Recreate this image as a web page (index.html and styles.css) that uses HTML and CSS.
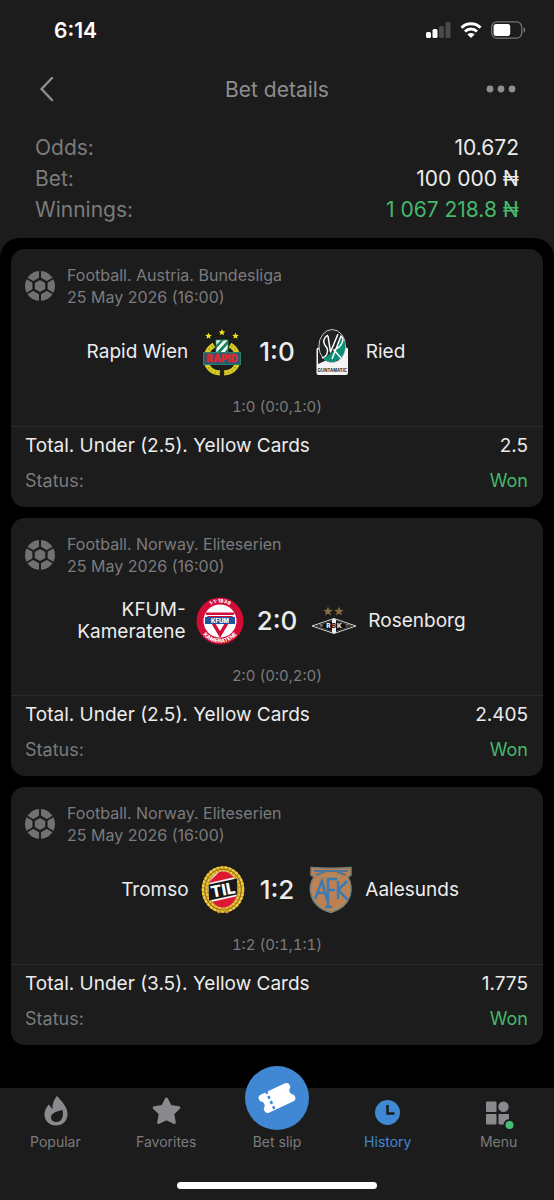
FILE: index.html
```html
<!DOCTYPE html>
<html lang="en">
<head>
<meta charset="utf-8">
<meta name="viewport" content="width=device-width, initial-scale=1">
<title>Bet details</title>
<link rel="stylesheet" href="styles.css">
</head>
<body>
<svg class="sprite" aria-hidden="true">
  <symbol id="ball" viewBox="0 0 30 30">
    <circle cx="15" cy="15" r="15" fill="#717173"/>
    <path d="M15 0V30M2 7.5L28 22.5M28 7.5L2 22.5" stroke="#1c1c1c" stroke-width="2"/>
    <path d="M15 7.600L21.400 11.300V18.700L15 22.400L8.600 18.700V11.300Z" fill="#717173" stroke="#1c1c1c" stroke-width="2.400"/>
  </symbol>
  <symbol id="star" viewBox="-10 -10 20 20">
    <path d="M0-10L2.6-3.3L9.5-3.1L4.1 1.2L5.9 8.1L0 4.2L-5.9 8.1L-4.1 1.2L-9.5-3.1L-2.6-3.3Z"/>
  </symbol>
</svg>
<div class="app">
  <header class="top">
    <div class="statusbar">
      <span class="clock">6:14</span>
      <span class="signals">
        <svg width="25" height="18" viewBox="0 0 25 18" aria-hidden="true">
          <rect x="0" y="11" width="5" height="6" rx="1.5" fill="#fff"/>
          <rect x="6.5" y="8" width="5" height="9" rx="1.5" fill="#fff"/>
          <rect x="13" y="5" width="5" height="12" rx="1.5" fill="#4a4a4a"/>
          <rect x="19.500" y="1" width="5" height="16" rx="1.5" fill="#4a4a4a"/>
        </svg>
        <svg width="22" height="18" viewBox="0 0 22 18" fill="none" stroke="#fff" stroke-width="3" aria-hidden="true">
          <path d="M1.500 6.700A13.500 13.500 0 0 1 20.500 6.700"/>
          <path d="M5 10.500A8.500 8.500 0 0 1 17 10.500"/>
          <path d="M11 17L7.400 13.400A5.200 5.200 0 0 1 14.600 13.400Z" fill="#fff" stroke="none"/>
        </svg>
        <svg width="35" height="18" viewBox="0 0 35 18" aria-hidden="true">
          <rect x="0.700" y="0.900" width="30" height="16.200" rx="5" fill="none" stroke="#757575" stroke-width="1.300"/>
          <rect x="2.600" y="2.900" width="16.600" height="12.200" rx="2.500" fill="#fff"/>
          <path d="M32.500 6.200C34.800 7 34.800 11 32.500 11.800Z" fill="#757575"/>
        </svg>
      </span>
    </div>
    <div class="navbar">
      <button class="iconbtn" type="button" aria-label="Back">
        <svg width="24" height="26" viewBox="0 0 24 26" fill="none" stroke="#8e8e90" stroke-width="2.500" stroke-linecap="round" stroke-linejoin="round"><path d="M16 2L5.500 13L16 24"/></svg>
      </button>
      <h1 class="title">Bet details</h1>
      <button class="iconbtn iconbtn-end" type="button" aria-label="More">
        <svg width="32" height="8" viewBox="0 0 32 8" fill="#8e8e90"><circle cx="4" cy="4" r="3.400"/><circle cx="15" cy="4" r="3.400"/><circle cx="26" cy="4" r="3.400"/></svg>
      </button>
    </div>
    <dl class="summary">
      <div class="sumrow"><dt>Odds:</dt><dd>10.672</dd></div>
      <div class="sumrow"><dt>Bet:</dt><dd>100 000 ₦</dd></div>
      <div class="sumrow"><dt>Winnings:</dt><dd class="win">1 067 218.8 ₦</dd></div>
    </dl>
  </header>

  <main class="events">
    <article class="card">
      <div class="league">
        <svg class="ball" aria-hidden="true"><use href="#ball"/></svg>
        <p>Football. Austria. Bundesliga<br>25 May 2026 (16:00)</p>
      </div>
      <div class="match">
        <div class="team home">
          <span class="name">Rapid Wien</span>
          <svg class="crest" viewBox="0 0 48 48" aria-hidden="true">
            <g fill="#f1e51d"><use href="#star" x="7" y="4.500" width="7" height="7"/><use href="#star" x="20.500" y="1" width="7" height="7"/><use href="#star" x="34" y="4.500" width="7" height="7"/></g>
            <path d="M22 45C6 44 3 25 16 17M26 45C42 44 45 25 32 17" fill="none" stroke="#d8cb20" stroke-width="5"/>
            <path d="M22 45C6 44 3 25 16 17M26 45C42 44 45 25 32 17" fill="none" stroke="#8f8620" stroke-width="1.500" stroke-dasharray="1 3"/>
            <rect x="18" y="12" width="12" height="13" fill="#f7faf6"/>
            <path d="M18 17L23 12H26L18 21ZM18 25L30 12V16L22 25ZM26 25L30 20V25Z" fill="#16835b"/>
            <rect x="18" y="12" width="12" height="13" fill="none" stroke="#278b69" stroke-width=".8"/>
            <rect x="5.500" y="24.500" width="37" height="12" fill="#245c78" stroke="#2a8169"/>
            <text x="24" y="34" text-anchor="middle" font-size="10" font-weight="900" fill="#d92b30" stroke="#d92b30" stroke-width=".6">RAPID</text>
          </svg>
        </div>
        <strong class="score">1:0</strong>
        <div class="team">
          <svg class="crest" viewBox="0 0 48 48" aria-hidden="true">
            <path d="M8.500 21Q8.500 19.500 11 19.500H38Q40 19.500 40 21V45Q40 47 38 47H10.500Q8.500 47 8.500 45Z" fill="#f4f4f4"/>
            <path d="M10 21.500L13 21L19 32L10 36Z" fill="#222"/>
            <ellipse cx="24.200" cy="18" rx="13.300" ry="16.500" fill="#222423" stroke="#c8c8c8"/>
            <path d="M34 7.500C41 20 35 33 24 34Q18 34 15 30Q28 25 34 7.500Z" fill="#079078"/>
            <path d="M20 7C14 11 15 15 19 20C21 25 18 29 14 30M20 8L22.500 24L30 6M24 31L33 8C37 11 34 19 26 22L33 30" fill="none" stroke="#fff" stroke-width="1.500" stroke-linejoin="round"/>
            <text class="sponsor" x="24.300" y="43.500" text-anchor="middle" font-size="4.500" font-weight="700" fill="#202020">GUNTAMATIC</text>
          </svg>
          <span class="name">Ried</span>
        </div>
      </div>
      <p class="periods">1:0 (0:0,1:0)</p>
      <dl class="market">
        <div class="mrow pick"><dt>Total. Under (2.5). Yellow Cards</dt><dd>2.5</dd></div>
        <div class="mrow"><dt>Status:</dt><dd class="win">Won</dd></div>
      </dl>
    </article>

    <article class="card">
      <div class="league">
        <svg class="ball" aria-hidden="true"><use href="#ball"/></svg>
        <p>Football. Norway. Eliteserien<br>25 May 2026 (16:00)</p>
      </div>
      <div class="match">
        <div class="team home">
          <span class="name">KFUM-Kameratene</span>
          <svg class="crest" viewBox="0 0 48 48" aria-hidden="true">
            <defs><path id="arcTop" d="M5.500 24A18.500 18.500 0 0 1 42.500 24"/><path id="arcBottom" d="M2.300 24A21.700 21.700 0 0 0 45.700 24"/></defs>
            <circle cx="24" cy="24" r="23.500" fill="#d20c36"/>
            <circle cx="24" cy="24" r="16.500" fill="#fff"/>
            <path d="M9 15.500H39L24 41Z" fill="#d20c36"/>
            <path d="M16 21H32L24 34Z" fill="#fff"/>
            <path d="M10 18.500H38" stroke="#fff"/>
            <rect x="9" y="20" width="30" height="7" fill="#1d55a0"/>
            <text x="24" y="25.700" text-anchor="middle" font-size="6" font-weight="800" fill="#fff">KFUM</text>
            <text font-size="5" font-weight="800" fill="#fff" text-anchor="middle"><textPath href="#arcTop" startOffset="50%">1·1·1939</textPath></text>
            <text font-size="5.500" font-weight="800" fill="#fff" text-anchor="middle"><textPath href="#arcBottom" startOffset="50%">KAMERATENE</textPath></text>
          </svg>
        </div>
        <strong class="score">2:0</strong>
        <div class="team">
          <svg class="crest" viewBox="0 0 48 48" aria-hidden="true">
            <g fill="#856b3d"><use href="#star" x="13" y="9.500" width="10" height="10"/><use href="#star" x="24" y="9.500" width="10" height="10"/></g>
            <path d="M2 29L24 21.500L46 29L24 36.500Z" fill="#111" stroke="#d2d2d2"/>
            <path d="M6 29L24 23L42 29L24 35Z" fill="none" stroke="#777" stroke-width=".5"/>
            <path d="M22 22.500L24 21.500L26 22.500V35.500L24 36.500L22 35.500Z" fill="#eee"/>
            <g font-size="6.500" font-weight="800" fill="#eee" text-anchor="middle"><text x="18.500" y="31.300">R</text><text x="24" y="31.300" fill="#222">B</text><text x="29.500" y="31.300">K</text></g>
            <g font-size="3" fill="#ddd" text-anchor="middle"><text x="11" y="30">19</text><text x="37" y="30">17</text></g>
          </svg>
          <span class="name">Rosenborg</span>
        </div>
      </div>
      <p class="periods">2:0 (0:0,2:0)</p>
      <dl class="market">
        <div class="mrow pick"><dt>Total. Under (2.5). Yellow Cards</dt><dd>2.405</dd></div>
        <div class="mrow"><dt>Status:</dt><dd class="win">Won</dd></div>
      </dl>
    </article>

    <article class="card">
      <div class="league">
        <svg class="ball" aria-hidden="true"><use href="#ball"/></svg>
        <p>Football. Norway. Eliteserien<br>25 May 2026 (16:00)</p>
      </div>
      <div class="match">
        <div class="team home">
          <span class="name">Tromso</span>
          <svg class="crest" viewBox="0 0 48 48" aria-hidden="true">
            <defs><clipPath id="tilOval"><ellipse cx="24" cy="23.500" rx="14.500" ry="18"/></clipPath></defs>
            <ellipse cx="24" cy="23.500" rx="18" ry="20" fill="none" stroke="#c99c24" stroke-width="6.500"/>
            <ellipse cx="24" cy="23.500" rx="20" ry="22" fill="none" stroke="#f4cf43" stroke-width="2.500" stroke-dasharray="2.600 1.400"/>
            <ellipse cx="24" cy="23.500" rx="16.800" ry="19" fill="none" stroke="#f0c83c" stroke-width="2" stroke-dasharray="2.300 1.500"/>
            <ellipse cx="24" cy="23.500" rx="18.300" ry="20.500" fill="none" stroke="#6a4d14" stroke-width=".7"/>
            <path d="M24 42L19 47M24 42L29 47" stroke="#c99c24" stroke-width="2"/>
            <g clip-path="url(#tilOval)"><path d="M8 4H40V44H8Z" fill="#f2f2ef"/><path d="M10 16L24 2L34 8L36 11L10 17ZM12 36L39 30L36 38L24 46Z" fill="#dd1833"/></g>
            <path d="M10 18.500L38 12.500V28.500L10 34.500Z" fill="#181818"/>
            <text x="24" y="29.500" text-anchor="middle" font-size="16" font-weight="800" fill="#fff" transform="rotate(-11 24 24)">TIL</text>
          </svg>
        </div>
        <strong class="score">1:2</strong>
        <div class="team">
          <svg class="crest" viewBox="0 0 48 48" aria-hidden="true">
            <path d="M4 1.500Q24 3 44 1.500V9L41 11Q46 20 43 30Q39 42 24 46.500Q8 42 4.500 30Q1 20 7 11L4 9Z" fill="#bf8051" stroke="#778078" stroke-width="1.500"/>
            <path d="M7 5H41M9 9Q15 7 19 5M39 9Q33 7 29 5" fill="none" stroke="#4d789e" stroke-width="2"/>
            <path d="M24 9C10 9 5 20 7 29C10 39 19 43 24 44C35 40 42 34 41 24C40 13 32 9 24 9" fill="none" stroke="#a49469"/>
            <path d="M8 33L15 15L20 34M10 27H19M21 42V13H30M21 24H28M31 15V33M40 15L31 24L41 34M18 41H25" fill="none" stroke="#387bb6" stroke-width="2.500"/>
          </svg>
          <span class="name">Aalesunds</span>
        </div>
      </div>
      <p class="periods">1:2 (0:1,1:1)</p>
      <dl class="market">
        <div class="mrow pick"><dt>Total. Under (3.5). Yellow Cards</dt><dd>1.775</dd></div>
        <div class="mrow"><dt>Status:</dt><dd class="win">Won</dd></div>
      </dl>
    </article>
  </main>

  <nav class="tabbar" aria-label="Main">
    <div class="tabs">
      <a class="tab" href="#popular">
        <svg class="tabicon" viewBox="0 0 30 30" aria-hidden="true"><path fill="#8a8a8e" fill-rule="evenodd" d="M17 0C22 5.500 27.500 11 27.500 18C27.500 25 22.500 29.500 16 29.500C9 29.500 4.500 24.500 4.500 18.500C4.500 14 7 10.500 9 8.500Q11 12 12.500 13C12 8 14 3.500 17 0ZM22.500 14C17 15 11 17 11 21.500C11 24.500 13.500 26 16.500 26C22 26 24 20 22.500 14Z"/></svg>
        <span>Popular</span>
      </a>
      <a class="tab" href="#favorites">
        <svg class="tabicon" viewBox="0 0 30 30" aria-hidden="true"><path fill="#8a8a8e" stroke="#8a8a8e" stroke-width="3" stroke-linejoin="round" d="M15.500 3L19.200 10.500L27.800 11.700L21.700 17.700L23.300 26.500L15.500 22.600L7.700 26.500L9.300 17.700L3.200 11.700L11.800 10.500Z"/></svg>
        <span>Favorites</span>
      </a>
      <a class="tab slip" href="#betslip">
        <svg class="slipicon" viewBox="0 0 64 64" aria-hidden="true">
          <circle cx="32" cy="32" r="32" fill="#4087d4"/>
          <g transform="rotate(-25 32 32)">
            <path fill="#fff" d="M19 22H45Q49 22 49 26Q49 28 48 28.500A4 4 0 0 0 48 35.500Q49 36 49 38Q49 42 45 42H19Q15 42 15 38Q15 36 16 35.500A4 4 0 0 0 16 28.500Q15 28 15 26Q15 22 19 22Z"/>
            <path stroke="#4087d4" stroke-width="2.600" stroke-dasharray="3 2.600" d="M25 21V43"/>
          </g>
        </svg>
        <span>Bet slip</span>
      </a>
      <a class="tab active" href="#history" aria-current="page">
        <svg class="tabicon" viewBox="0 0 30 30" aria-hidden="true"><circle cx="14.500" cy="16.500" r="12.500" fill="#4087d4"/><path d="M14.500 9V17.500H21.500" fill="none" stroke="#1c1c1c" stroke-width="2.500"/></svg>
        <span>History</span>
      </a>
      <a class="tab" href="#menu">
        <svg class="tabicon" viewBox="0 0 30 30" aria-hidden="true"><g fill="#8a8a8e"><rect x="2" y="5.500" width="10.500" height="10.500" rx="1"/><circle cx="19.500" cy="10.700" r="5.200"/><rect x="2" y="18" width="10.500" height="10.500" rx="1"/><rect x="14.500" y="18" width="10.500" height="10.500" rx="1"/></g><circle cx="25.500" cy="29" r="5" fill="#46bd72" stroke="#1c1c1c" stroke-width="2"/></svg>
        <span>Menu</span>
      </a>
    </div>
    <div class="homebar"></div>
  </nav>
</div>
</body>
</html>
```
FILE: styles.css
```css
* { box-sizing: border-box; }

body {
  margin: 0;
  background: #000;
  color: #ececec;
  font-family: Inter, "Liberation Sans", sans-serif;
}

p, h1, dl, dd { margin: 0; }

.sprite {
  position: absolute;
  width: 0;
  height: 0;
}

.app {
  display: flex;
  flex-direction: column;
  min-height: 100vh;
  background: #1c1c1c;
}

.statusbar {
  display: flex;
  align-items: center;
  justify-content: space-between;
  height: 60px;
  padding: 0 28px 0 54px;
}

.clock {
  color: #fff;
  font-size: 21px;
  font-weight: 600;
}

.signals {
  display: flex;
  gap: 9px;
}

.navbar {
  display: grid;
  grid-template-columns: 1fr auto 1fr;
  align-items: center;
  height: 58px;
  padding: 0 36px;
}

.title {
  color: #8e8e90;
  font-size: 21px;
  font-weight: 400;
}

.iconbtn {
  display: flex;
  align-items: center;
  width: 44px;
  height: 44px;
  padding: 0;
  border: 0;
  background: none;
}

.iconbtn-end {
  justify-self: end;
  justify-content: flex-end;
}

.summary {
  padding: 14px 35px 13px;
  font-size: 21px;
  line-height: 31px;
}

.sumrow, .mrow {
  display: flex;
  justify-content: space-between;
}

.sumrow dt, .mrow dt { color: #7b7b7d; }

.sumrow .win, .mrow .win { color: #45b96b; }

.events {
  display: flex;
  flex: 1;
  flex-direction: column;
  gap: 11px;
  padding: 11px 11px 43px;
  border-radius: 20px 20px 0 0;
  background: #000;
}

.card {
  padding-top: 15px;
  border-radius: 14px;
  background: #1c1c1c;
}

.league {
  display: flex;
  align-items: center;
  gap: 12px;
  padding: 0 14px;
  color: #7b7b7d;
  font-size: 16px;
  line-height: 22px;
}

.ball {
  width: 30px;
  height: 30px;
}

.match {
  display: grid;
  grid-template-columns: 1fr auto 1fr;
  align-items: center;
  gap: 13px;
  padding: 20px 60px;
}

.team {
  display: flex;
  align-items: center;
  gap: 10px;
  font-size: 19px;
  line-height: 22px;
}

.home {
  justify-content: flex-end;
  text-align: right;
}

.crest {
  flex: none;
  width: 48px;
  height: 48px;
}

.sponsor { font-family: "Liberation Sans", sans-serif; }

.score {
  font-size: 26px;
  font-weight: 500;
  line-height: 32px;
}

.periods {
  padding-bottom: 8px;
  border-bottom: 1px solid #2a2a2b;
  color: #7b7b7d;
  font-size: 15px;
  font-variant-numeric: tabular-nums;
  line-height: 22px;
  text-align: center;
}

.market {
  display: grid;
  gap: 11px;
  padding: 7px 15px 14px 14px;
  font-size: 18px;
  line-height: 24px;
}

.pick { font-size: 19px; }

.mrow.pick dt { color: #ececec; }

.tabbar { background: #1c1c1c; }

.tabs {
  display: grid;
  grid-template-columns: repeat(5, 1fr);
  height: 94px;
}

.tab {
  display: flex;
  flex-direction: column;
  align-items: center;
  gap: 7px;
  padding-top: 8px;
  color: #7b7b7d;
  font-size: 14px;
  line-height: 18px;
  text-decoration: none;
}

.tabicon {
  width: 30px;
  height: 30px;
  overflow: visible;
}

.slip {
  gap: 3px;
  margin-top: -22px;
  padding-top: 0;
}

.slipicon {
  width: 64px;
  height: 64px;
}

.active { color: #4087d4; }

.homebar {
  width: 36%;
  height: 7px;
  margin: 0 auto 11px;
  border-radius: 4px;
  background: #fff;
}
```
